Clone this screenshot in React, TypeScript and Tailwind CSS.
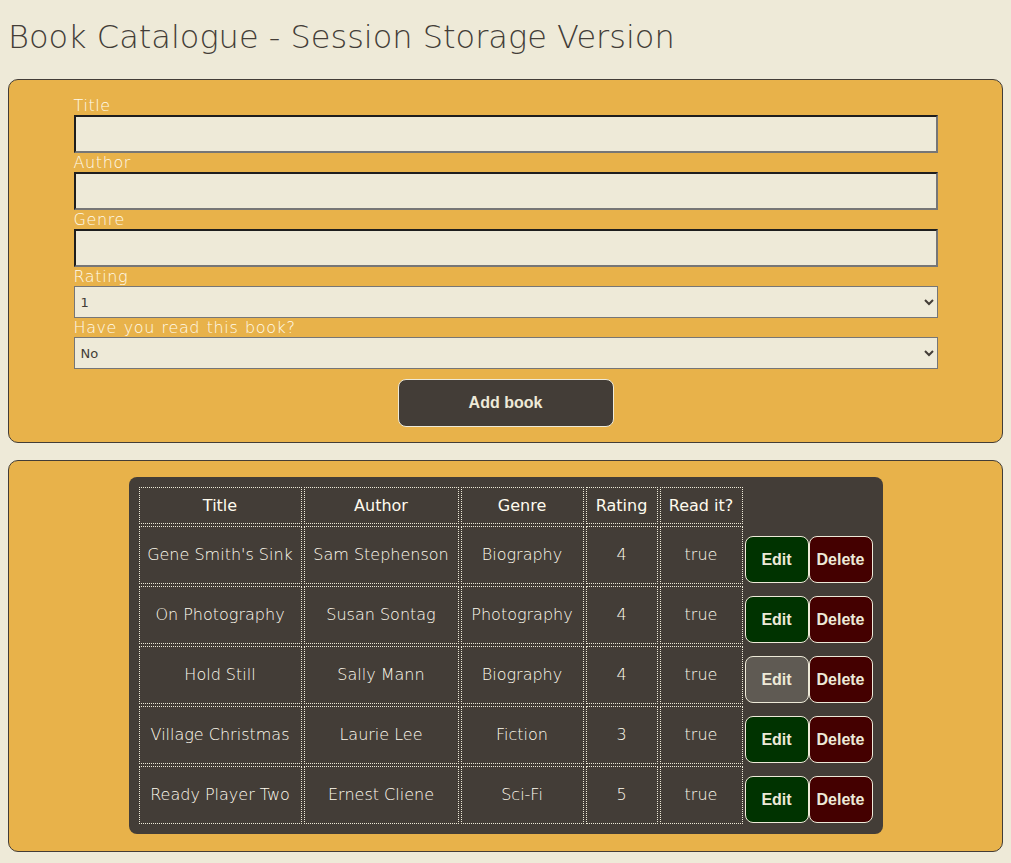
import React from 'react';

type Book = { title: string; author: string; genre: string; rating: number; read: boolean };

const books: Book[] = [
  { title: "Gene Smith's Sink", author: 'Sam Stephenson', genre: 'Biography', rating: 4, read: true },
  { title: 'On Photography', author: 'Susan Sontag', genre: 'Photography', rating: 4, read: true },
  { title: 'Hold Still', author: 'Sally Mann', genre: 'Biography', rating: 4, read: true },
  { title: 'Village Christmas', author: 'Laurie Lee', genre: 'Fiction', rating: 3, read: true },
  { title: 'Ready Player Two', author: 'Ernest Cliene', genre: 'Sci-Fi', rating: 5, read: true },
];

const font = "font-['DejaVu_Sans',sans-serif]";
const btnFont = "font-['Liberation_Sans',Arial,sans-serif]";

function Label({ children }: { children: React.ReactNode }) {
  return (
    <label className="block h-[19px] leading-[19px] text-[16px] font-light tracking-[0.6px] [word-spacing:1px] text-[#fffbec]">
      {children}
    </label>
  );
}

function Field({ label }: { label: string }) {
  return (
    <>
      <Label>{label}</Label>
      <input
        type="text"
        className="block w-full h-[38px] bg-[#eeead8] border-2 border-t-[#1e1e1e] border-l-[#1e1e1e] border-b-[#767676] border-r-[#767676] outline-none"
      />
    </>
  );
}

export default function App() {
  return (
    <div className={`min-h-[863px] bg-[#eeead8] px-2 pb-3 text-[#433d37] ${font}`}>
      <h1 className="pt-[18px] mb-[22px] leading-[39px] text-[32px] font-light">
        Book Catalogue - Session Storage Version
      </h1>

      <section className="bg-[#e8b24a] border border-[#433d37] rounded-[10px] pt-[16px] pb-[15px]">
        <form className="w-[864px] mx-auto" onSubmit={(e) => e.preventDefault()}>
          <Field label="Title" />
          <Field label="Author" />
          <Field label="Genre" />
          <Label>Rating</Label>
          <select className="block w-full h-[32px] bg-[#eeead8] border border-[#767676] text-[13px] px-[2px] text-[#433d37]">
            <option>1</option>
            <option>2</option>
            <option>3</option>
            <option>4</option>
            <option>5</option>
          </select>
          <Label>Have you read this book?</Label>
          <select className="block w-full h-[32px] bg-[#eeead8] border border-[#767676] text-[13px] px-[2px] text-[#433d37]">
            <option>No</option>
            <option>Yes</option>
          </select>
          <div className="flex justify-center mt-[10px]">
            <button
              type="submit"
              className={`w-[216px] h-[48px] rounded-[8px] border border-[#eeead8] bg-[#433d37] text-[#eeead8] text-[16px] font-bold ${btnFont}`}
            >
              Add book
            </button>
          </div>
        </form>
      </section>

      <section className="mt-[17px] bg-[#e8b24a] border border-[#433d37] rounded-[10px] pt-4 pb-[17px] flex justify-center">
        <div className="bg-[#433d37] rounded-[8px] p-[10px] text-[#fffbee]">
          <table className="border-separate border-spacing-[2px] -m-[2px] text-[16px]">
            <thead>
              <tr className="h-[37px]">
                <th className="w-[163px] border border-dotted border-[#eeead8] font-normal">Title</th>
                <th className="w-[155px] border border-dotted border-[#eeead8] font-normal">Author</th>
                <th className="w-[123px] border border-dotted border-[#eeead8] font-normal">Genre</th>
                <th className="w-[72px] border border-dotted border-[#eeead8] font-normal">Rating</th>
                <th className="w-[83px] border border-dotted border-[#eeead8] font-normal">Read it?</th>
                <th className="w-[128px]"></th>
              </tr>
            </thead>
            <tbody>
              {books.map((b, i) => (
                <tr key={b.title} className="h-[58px]">
                  <td className="border border-dotted border-[#eeead8] text-center font-light">{b.title}</td>
                  <td className="border border-dotted border-[#eeead8] text-center font-light">{b.author}</td>
                  <td className="border border-dotted border-[#eeead8] text-center font-light">{b.genre}</td>
                  <td className="border border-dotted border-[#eeead8] text-center font-light">{b.rating}</td>
                  <td className="border border-dotted border-[#eeead8] text-center font-light">{String(b.read)}</td>
                  <td className="pt-[10px] align-top">
                    <div className={`flex ${btnFont}`}>
                      <button
                        className={`w-[64px] h-[47px] rounded-[8px] border border-[#eeead8] text-[#eeead8] text-[16px] font-bold ${
                          i === 2 ? 'bg-[#5f5a53]' : 'bg-[#003300]'
                        }`}
                      >
                        Edit
                      </button>
                      <button className="w-[64px] h-[47px] rounded-[8px] border border-[#eeead8] bg-[#440000] text-[#eeead8] text-[16px] font-bold">
                        Delete
                      </button>
                    </div>
                  </td>
                </tr>
              ))}
            </tbody>
          </table>
        </div>
      </section>
    </div>
  );
}
